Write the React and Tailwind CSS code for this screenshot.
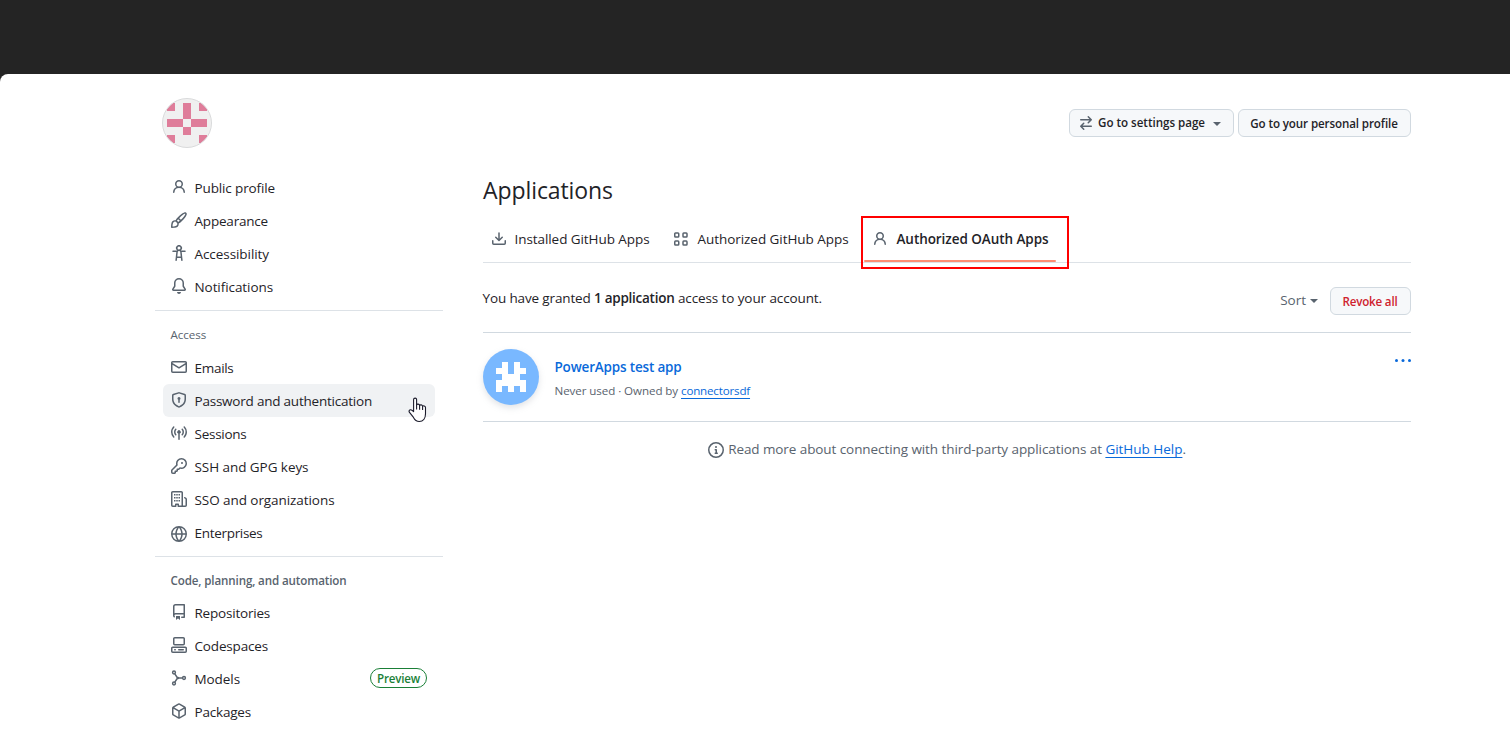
import React from "react";

const PATHS = {
  person:
    "M10.561 8.073a6.005 6.005 0 0 1 3.432 5.142.75.75 0 1 1-1.498.07 4.5 4.5 0 0 0-8.99 0 .75.75 0 0 1-1.498-.07 6.004 6.004 0 0 1 3.431-5.142 3.999 3.999 0 1 1 5.123 0ZM10.5 5a2.5 2.5 0 1 0-5 0 2.5 2.5 0 0 0 5 0Z",
  paintbrush:
    "M11.134 1.535c.7-.509 1.416-.942 2.076-1.155.649-.21 1.463-.267 2.069.34.603.601.568 1.411.368 2.07-.202.668-.624 1.39-1.125 2.096-1.011 1.424-2.496 2.987-3.775 4.249-1.098 1.084-2.132 1.839-3.04 2.3a3.744 3.744 0 0 1-1.055 3.217c-.431.431-1.065.691-1.657.861-.614.177-1.294.287-1.914.357A21.151 21.151 0 0 1 .797 16H.743l.007-.75H.749L.742 16a.75.75 0 0 1-.743-.742l.743-.008-.742.007v-.054a21.25 21.25 0 0 1 .13-2.284c.067-.647.187-1.287.358-1.914.17-.591.43-1.226.86-1.657a3.746 3.746 0 0 1 3.227-1.054c.466-.893 1.225-1.907 2.314-2.982 1.271-1.255 2.833-2.75 4.245-3.777ZM1.62 13.089c-.051.464-.086.929-.104 1.395.466-.018.932-.053 1.396-.104a10.511 10.511 0 0 0 1.668-.309c.526-.151.856-.325 1.011-.48a2.25 2.25 0 1 0-3.182-3.182c-.155.155-.329.485-.48 1.01a10.515 10.515 0 0 0-.309 1.67Zm10.396-10.34c-1.224.89-2.605 2.189-3.822 3.384l1.718 1.718c1.21-1.205 2.51-2.597 3.387-3.833.47-.662.78-1.227.912-1.662.134-.444.032-.551.009-.575h-.001V1.78c-.014-.014-.113-.113-.548.027-.432.14-.995.462-1.655.942Zm-4.832 7.266-.001.001a9.859 9.859 0 0 0 1.63-1.142L7.155 7.216a9.7 9.7 0 0 0-1.161 1.607c.482.302.889.71 1.19 1.192Z",
  accessibility:
    "M9.923 5.302c.063.063.122.129.178.198H14A.75.75 0 0 1 14 7h-3.3l.578 5.163.362 2.997a.75.75 0 0 1-1.49.18L9.868 13H6.132l-.282 2.34a.75.75 0 0 1-1.49-.18l.362-2.997L5.3 7H2a.75.75 0 0 1 0-1.5h3.9a2.54 2.54 0 0 1 .176-.198 3 3 0 1 1 3.847 0ZM9.2 7.073h-.001a1.206 1.206 0 0 0-2.398 0L6.305 11.5h3.39ZM9.5 3a1.5 1.5 0 1 0-3.001.001A1.5 1.5 0 0 0 9.5 3Z",
  bell:
    "M8 16a2 2 0 0 0 1.985-1.75c.017-.137-.097-.25-.235-.25h-3.5c-.138 0-.252.113-.235.25A2 2 0 0 0 8 16ZM3 5a5 5 0 0 1 10 0v2.947c0 .05.015.098.042.139l1.703 2.555A1.519 1.519 0 0 1 13.482 13H2.518a1.516 1.516 0 0 1-1.263-2.36l1.703-2.554A.255.255 0 0 0 3 7.947Zm5-3.5A3.5 3.5 0 0 0 4.5 5v2.947c0 .346-.102.683-.294.97l-1.703 2.556a.017.017 0 0 0-.003.01l.001.006c0 .002.002.004.004.006l.006.004.007.001h10.964l.007-.001.006-.004.004-.006.001-.007a.017.017 0 0 0-.003-.01l-1.703-2.554a1.745 1.745 0 0 1-.294-.97V5A3.5 3.5 0 0 0 8 1.5Z",
  mail:
    "M1.75 2h12.5c.966 0 1.75.784 1.75 1.75v8.5A1.75 1.75 0 0 1 14.25 14H1.75A1.75 1.75 0 0 1 0 12.25v-8.5C0 2.784.784 2 1.75 2ZM1.5 12.251c0 .138.112.25.25.25h12.5a.25.25 0 0 0 .25-.25V5.809L8.38 9.397a.75.75 0 0 1-.76 0L1.5 5.809v6.442Zm13-8.181v-.32a.25.25 0 0 0-.25-.25H1.75a.25.25 0 0 0-.25.25v.32L8 7.88Z",
  shieldLock:
    "m8.533.133 5.25 1.68A1.75 1.75 0 0 1 15 3.48V7c0 1.566-.32 3.182-1.303 4.682-.983 1.498-2.585 2.813-5.032 3.855a1.697 1.697 0 0 1-1.33 0c-2.447-1.042-4.049-2.357-5.032-3.855C1.32 10.182 1 8.566 1 7V3.48a1.75 1.75 0 0 1 1.217-1.667l5.25-1.68a1.748 1.748 0 0 1 1.066 0Zm-.61 1.429.001.001-5.25 1.68a.251.251 0 0 0-.174.237V7c0 1.36.275 2.666 1.057 3.859.784 1.194 2.121 2.342 4.366 3.298a.196.196 0 0 0 .154 0c2.245-.957 3.582-2.103 4.366-3.297C13.225 9.666 13.5 8.358 13.5 7V3.48a.25.25 0 0 0-.174-.238l-5.25-1.68a.25.25 0 0 0-.153 0ZM9.5 6.5c0 .536-.286 1.032-.75 1.3v2.45a.75.75 0 0 1-1.5 0V7.8A1.5 1.5 0 1 1 9.5 6.5Z",
  broadcast:
    "M8.75 8.582v5.668a.75.75 0 0 1-1.5 0V8.582a1.75 1.75 0 1 1 1.5 0Zm3.983-7.125a.75.75 0 0 1 1.06.026A7.976 7.976 0 0 1 16 7c0 2.139-.84 4.083-2.207 5.517a.75.75 0 1 1-1.086-1.034A6.474 6.474 0 0 0 14.5 7a6.474 6.474 0 0 0-1.793-4.483.75.75 0 0 1 .026-1.06Zm-9.466 0c.3.286.312.76.026 1.06A6.474 6.474 0 0 0 1.5 7a6.47 6.47 0 0 0 1.793 4.483.75.75 0 0 1-1.086 1.034A7.973 7.973 0 0 1 0 7c0-2.139.84-4.083 2.207-5.517a.75.75 0 0 1 1.06-.026Zm8.556 2.321A4.988 4.988 0 0 1 13 7a4.988 4.988 0 0 1-1.177 3.222.75.75 0 1 1-1.146-.967A3.487 3.487 0 0 0 11.5 7c0-.86-.309-1.645-.823-2.255a.75.75 0 0 1 1.146-.967Zm-6.492.958A3.48 3.48 0 0 0 4.5 7a3.48 3.48 0 0 0 .823 2.255.75.75 0 0 1-1.146.967A4.981 4.981 0 0 1 3 7a4.982 4.982 0 0 1 1.188-3.236.75.75 0 1 1 1.143.972Z",
  key:
    "M10.5 0a5.499 5.499 0 1 1-1.288 10.848l-.932.932a.749.749 0 0 1-.53.22H7v.75a.749.749 0 0 1-.22.53l-.5.5a.749.749 0 0 1-.53.22H5v.75a.749.749 0 0 1-.22.53l-.5.5a.749.749 0 0 1-.53.22h-2A1.75 1.75 0 0 1 0 14.25v-2c0-.199.079-.389.22-.53l4.932-4.932A5.5 5.5 0 0 1 10.5 0Zm-4 5.5c-.001.431.069.86.205 1.269a.75.75 0 0 1-.181.768L1.5 12.56v1.69c0 .138.112.25.25.25h1.69l.06-.06v-1.19a.75.75 0 0 1 .75-.75h1.19l.06-.06v-1.19a.75.75 0 0 1 .75-.75h1.19l1.023-1.025a.75.75 0 0 1 .768-.18A4 4 0 1 0 6.5 5.5ZM11 6a1 1 0 1 1 0-2 1 1 0 0 1 0 2Z",
  organization:
    "M1.75 16A1.75 1.75 0 0 1 0 14.25V1.75C0 .784.784 0 1.75 0h8.5C11.216 0 12 .784 12 1.75v12.5c0 .085-.006.168-.018.25h2.268a.25.25 0 0 0 .25-.25V8.285a.25.25 0 0 0-.111-.208l-1.055-.703a.749.749 0 1 1 .832-1.248l1.055.703c.487.325.779.871.779 1.456v5.965A1.75 1.75 0 0 1 14.25 16h-3.5a.766.766 0 0 1-.197-.026c-.099.017-.2.026-.303.026h-3a.75.75 0 0 1-.75-.75V14h-1v1.25a.75.75 0 0 1-.75.75Zm-.25-1.75c0 .138.112.25.25.25H4v-1.25a.75.75 0 0 1 .75-.75h2.5a.75.75 0 0 1 .75.75v1.25h2.25a.25.25 0 0 0 .25-.25V1.75a.25.25 0 0 0-.25-.25h-8.5a.25.25 0 0 0-.25.25ZM3 3h1.500v1.500H3ZM5.250 3h1.500v1.500h-1.500ZM7.500 3h1.500v1.500H7.500ZM3 6h1.500v1.500H3ZM5.250 6h1.500v1.500h-1.500ZM7.500 6h1.500v1.500H7.500ZM3 9h1.500v1.500H3ZM5.250 9h1.500v1.500h-1.500ZM7.500 9h1.500v1.500H7.500Z",
  globe:
    "M8 0a8 8 0 1 1 0 16A8 8 0 0 1 8 0ZM5.78 8.75a9.64 9.64 0 0 0 1.363 4.177c.255.426.542.832.857 1.215.245-.296.551-.705.857-1.215A9.64 9.64 0 0 0 10.22 8.75Zm4.44-1.5a9.64 9.64 0 0 0-1.363-4.177c-.307-.51-.612-.919-.857-1.215a9.927 9.927 0 0 0-.857 1.215A9.64 9.64 0 0 0 5.78 7.25Zm-5.944 1.5H1.543a6.507 6.507 0 0 0 4.666 5.5c-.123-.181-.24-.365-.352-.552-.715-1.192-1.437-2.874-1.581-4.948Zm-2.733-1.5h2.733c.144-2.074.866-3.756 1.58-4.948.12-.197.237-.381.353-.552a6.507 6.507 0 0 0-4.666 5.5Zm10.181 1.5c-.144 2.074-.866 3.756-1.58 4.948-.12.197-.237.381-.353.552a6.507 6.507 0 0 0 4.666-5.5Zm2.733-1.5a6.507 6.507 0 0 0-4.666-5.5c.123.181.24.365.353.552.714 1.192 1.436 2.874 1.58 4.948Z",
  repo:
    "M2 2.5A2.5 2.5 0 0 1 4.5 0h8.75a.75.75 0 0 1 .75.75v12.5a.75.75 0 0 1-.75.75h-2.5a.75.75 0 0 1 0-1.5h1.75v-2h-8a1 1 0 0 0-.714 1.7.75.75 0 1 1-1.072 1.05A2.495 2.495 0 0 1 2 11.5Zm10.5-1h-8a1 1 0 0 0-1 1v6.708A2.486 2.486 0 0 1 4.5 9h8ZM5 12.25a.25.25 0 0 1 .25-.25h3.5a.25.25 0 0 1 .25.25v3.25a.25.25 0 0 1-.4.2l-1.45-1.087a.249.249 0 0 0-.3 0L5.4 15.7a.25.25 0 0 1-.4-.2Z",
  codespaces:
    "M0 11.25c0-.966.784-1.75 1.75-1.75h12.5c.966 0 1.75.784 1.75 1.75v3A1.75 1.75 0 0 1 14.25 16H1.75A1.75 1.75 0 0 1 0 14.25Zm2-9.5C2 .784 2.784 0 3.75 0h8.5C13.216 0 14 .784 14 1.75v5a1.75 1.75 0 0 1-1.75 1.75h-8.5A1.75 1.75 0 0 1 2 6.75Zm1.75-.25a.25.25 0 0 0-.25.25v5c0 .138.112.25.25.25h8.5a.25.25 0 0 0 .25-.25v-5a.25.25 0 0 0-.25-.25Zm-2 9.5a.25.25 0 0 0-.25.25v3c0 .138.112.25.25.25h12.5a.25.25 0 0 0 .25-.25v-3a.25.25 0 0 0-.25-.25ZM7 12.75a.75.75 0 0 1 .75-.75h4.5a.75.75 0 0 1 0 1.5h-4.5a.75.75 0 0 1-.75-.75Zm-4 0a.75.75 0 0 1 .75-.75h.5a.75.75 0 0 1 0 1.5h-.5a.75.75 0 0 1-.75-.75Z",
  package:
    "m8.878.392 5.25 3.045c.54.314.872.89.872 1.514v6.098a1.75 1.75 0 0 1-.872 1.514l-5.25 3.045a1.75 1.75 0 0 1-1.756 0l-5.25-3.045A1.75 1.75 0 0 1 1 11.049V4.951c0-.624.332-1.201.872-1.514L7.122.392a1.75 1.75 0 0 1 1.756 0ZM7.875 1.69l-4.63 2.685L8 7.133l4.755-2.758-4.63-2.685a.248.248 0 0 0-.25 0ZM2.5 5.677v5.372c0 .09.047.171.125.216l4.625 2.683V8.432Zm6.25 8.271 4.625-2.683a.25.25 0 0 0 .125-.216V5.677L8.75 8.432Z",
  download:
    "M2.75 14A1.75 1.75 0 0 1 1 12.25v-2.5a.75.75 0 0 1 1.5 0v2.5c0 .138.112.25.25.25h10.5a.25.25 0 0 0 .25-.25v-2.5a.75.75 0 0 1 1.5 0v2.5A1.75 1.75 0 0 1 13.25 14ZM7.25 7.689V2a.75.75 0 0 1 1.5 0v5.689l1.97-1.969a.749.749 0 1 1 1.06 1.06l-3.25 3.25a.749.749 0 0 1-1.06 0L4.22 6.78a.749.749 0 1 1 1.06-1.06l1.97 1.969Z",
  arrowSwitch:
    "M5.22 14.78a.75.75 0 0 0 1.06-1.06L4.56 12h8.69a.75.75 0 0 0 0-1.5H4.56l1.72-1.72a.75.75 0 0 0-1.06-1.06l-3 3a.75.75 0 0 0 0 1.06l3 3Zm5.56-6.5a.75.75 0 1 1-1.06-1.06l1.72-1.72H2.75a.75.75 0 0 1 0-1.5h8.69L9.72 2.28a.75.75 0 0 1 1.06-1.06l3 3a.75.75 0 0 1 0 1.06l-3 3Z",
  info:
    "M0 8a8 8 0 1 1 16 0A8 8 0 0 1 0 8Zm8-6.5a6.5 6.5 0 1 0 0 13 6.5 6.5 0 0 0 0-13ZM6.5 7.75A.75.75 0 0 1 7.25 7h1a.75.75 0 0 1 .75.75v2.75h.25a.75.75 0 0 1 0 1.5h-2a.75.75 0 0 1 0-1.5h.25v-2h-.25a.75.75 0 0 1-.75-.75ZM8 6a1 1 0 1 1 0-2 1 1 0 0 1 0 2Z",
};

function Icon({ name, className = "" }) {
  return (
    <svg viewBox="0 0 16 16" className={`size-4 shrink-0 fill-[#59636e] ${className}`} aria-hidden="true">
      <path d={PATHS[name]} />
    </svg>
  );
}

function ModelIcon({ className = "" }) {
  return (
    <svg viewBox="0 0 16 16" className={`size-4 shrink-0 ${className}`} fill="none" stroke="#59636e" strokeWidth="1.5" aria-hidden="true">
      <circle cx="3" cy="2.5" r="1.4" />
      <circle cx="3" cy="13.500" r="1.4" />
      <circle cx="13" cy="8" r="1.4" />
      <path d="M3.800 3.800 6.600 8l-2.800 4.200M6.600 8h5" />
      <circle cx="6.900" cy="8" r="1.200" fill="#59636e" stroke="none" />
    </svg>
  );
}

function AppsIcon() {
  return (
    <svg viewBox="0 0 16 16" className="size-4 shrink-0" fill="none" stroke="#59636e" strokeWidth="1.5" aria-hidden="true">
      <rect x="1.75" y="2" width="4" height="4" rx="0.8" />
      <rect x="10" y="2" width="4" height="4" rx="0.8" />
      <rect x="1.75" y="10.100" width="4" height="4" rx="0.8" />
      <rect x="10" y="10.100" width="4" height="4" rx="0.8" />
    </svg>
  );
}

function Caret({ className = "" }) {
  return (
    <svg viewBox="0 0 8 4" className={`h-1 w-2 shrink-0 fill-[#59636e] ${className}`} aria-hidden="true">
      <path d="M0 0h8L4 4Z" />
    </svg>
  );
}

function HandCursor() {
  return (
    <svg viewBox="0 0 20 26" className="pointer-events-none absolute left-[245px] top-[13px] h-[26px] w-5" aria-hidden="true">
      <path
        d="M5.6 14.6V2.6a1.5 1.5 0 0 1 3 0V8c.3-1.3 2.9-1.2 3 .6.5-1.1 2.9-1 3 .8.6-1 2.9-.7 2.9 1.2v6.2c0 4.600-2.400 7.700-6.200 7.700-3.400 0-4.700-1.800-6-4.300L1.300 15.200c-.9-2.100 1.300-3.200 2.700-1.900Z"
        fill="#fff"
        stroke="#1b1b2b"
        strokeWidth="1.100"
        strokeLinejoin="round"
      />
      <path d="M8.600 7.500v5M11.600 8.500v4.200M14.600 9.500v3.500" stroke="#1b1b2b" strokeWidth="1.100" fill="none" />
    </svg>
  );
}

const PROFILE = [
  { icon: "person", label: "Public profile", track: "tracking-[-0.128px]" },
  { icon: "paintbrush", label: "Appearance", track: "tracking-[-0.198px]" },
  { icon: "accessibility", label: "Accessibility", track: "tracking-[-0.068px]" },
  { icon: "bell", label: "Notifications", track: "tracking-[-0.075px]" },
];

const ACCESS = [
  { icon: "mail", label: "Emails", track: "tracking-[-0.292px]" },
  { icon: "shieldLock", label: "Password and authentication", track: "tracking-[-0.22px]", hovered: true },
  { icon: "broadcast", label: "Sessions", track: "tracking-[-0.262px]" },
  { icon: "key", label: "SSH and GPG keys", track: "tracking-[-0.059px]" },
  { icon: "organization", label: "SSO and organizations", track: "tracking-[-0.067px]" },
  { icon: "globe", label: "Enterprises", track: "tracking-[-0.302px]", iconClass: "mt-[10px]" },
];

const CODE = [
  { icon: "repo", label: "Repositories", track: "tracking-[-0.209px]" },
  { icon: "codespaces", label: "Codespaces", track: "tracking-[-0.164px]" },
  { icon: "model", label: "Models", track: "tracking-[-0.074px]", badge: "Preview" },
  { icon: "package", label: "Packages", track: "tracking-[-0.191px]" },
];

function NavItem({ item }) {
  const offset = item.iconClass || "mt-2";
  return (
    <li className={`relative flex h-[33px] items-start gap-[7.5px] rounded-md px-2 ${item.hovered ? "bg-[#f0f2f4]" : ""}`}>
      {item.icon === "model" ? <ModelIcon className={offset} /> : <Icon name={item.icon} className={offset} />}
      <span className={`whitespace-nowrap leading-[35px] ${item.track}`}>{item.label}</span>
      {item.badge && (
        <span className="ml-auto mt-[6px] h-5 w-[57px] rounded-full border border-[#1a7f37] text-center text-[11.6px] font-semibold leading-5 tracking-[-0.196px] text-[#1a7f37]">
          {item.badge}
        </span>
      )}
      {item.hovered && <HandCursor />}
    </li>
  );
}

function NavList({ items }) {
  return (
    <ul className="px-2">
      {items.map((item) => (
        <NavItem key={item.label} item={item} />
      ))}
    </ul>
  );
}

function NavHeading({ children, className }) {
  return (
    <h3 className={`mt-2 h-[31px] px-[15.5px] text-[11.6px] leading-[31px] text-[#59636e] ${className}`}>
      {children}
    </h3>
  );
}

function UserAvatar() {
  return (
    <svg viewBox="0 0 50 50" className="ml-[7px] size-[50px]" aria-hidden="true">
      <defs>
        <clipPath id="avatar">
          <circle cx="25" cy="25" r="24.500" />
        </clipPath>
      </defs>
      <g clipPath="url(#avatar)">
        <path d="M0 0h50v50H0z" fill="#f0f0f0" />
        <path
          d="M5 5h8v8H5zM21 5h8v16h-8zM37 5h8v8h-8zM5 21h16v8H5zM29 21h16v8H29zM21 29h8v8h-8zM5 37h8v8H5zM37 37h8v8h-8z"
          fill="#df7d9a"
        />
      </g>
      <circle cx="25" cy="25" r="24.500" fill="none" stroke="#d9dadb" />
    </svg>
  );
}

function AppAvatar() {
  return (
    <div className="size-14 shrink-0 rounded-full bg-[#79b8ff] shadow-[0_3px_6px_rgba(140,149,159,0.25)]">
      <svg viewBox="0 0 56 56" className="size-14" fill="#fff" aria-hidden="true">
        <path d="M19 13h6v12h6V13h6v6h6v6h-6v6h6v12h-6v-6h-6v6h-6v-6h-6v6h-6V31h6v-6h-6v-6h6z" />
      </svg>
    </div>
  );
}

export default function App() {
  return (
    <div className="flex h-[734px] w-[1510px] flex-col overflow-hidden bg-[#242424] font-['Open_Sans',sans-serif] text-[13.5px] text-[#1f2328]">
      <div className="h-[74px] shrink-0" />
      <div className="flex-1 rounded-tl-lg bg-white pl-[155px] pt-6">
        <header className="flex h-[50px] w-[1256px] items-start justify-between">
          <UserAvatar />
          <div className="mt-[11px] flex gap-1 text-[11.6px] font-semibold">
            <button className="flex h-7 w-[165px] items-start rounded-md border border-[#d1d9e0] bg-[#f6f8fa] pl-2">
              <Icon name="arrowSwitch" className="mt-[5px]" />
              <span className="ml-1 whitespace-nowrap leading-[25px] tracking-[-0.021px]">Go to settings page</span>
              <Caret className="ml-2 mt-3" />
            </button>
            <button className="h-7 w-[173px] whitespace-nowrap rounded-md border border-[#d1d9e0] bg-[#f6f8fa] pr-px text-center leading-[28px] tracking-[-0.109px]">
              Go to your personal profile
            </button>
          </div>
        </header>

        <div className="flex gap-10 pt-[23px]">
          <nav className="w-[288px] shrink-0">
            <NavList items={PROFILE} />
            <div className="mt-[7px] h-px bg-[#dde2e7]" />
            <NavHeading className="mb-px font-medium tracking-[-0.06px]">Access</NavHeading>
            <NavList items={ACCESS} />
            <div className="mt-[7px] h-px bg-[#dde2e7]" />
            <NavHeading className="font-semibold tracking-[-0.123px]">Code, planning, and automation</NavHeading>
            <NavList items={CODE} />
          </nav>

          <main className="w-[928px]">
            <h1 className="h-[38px] text-[23px] leading-[38px] tracking-[-0.084px]">Applications</h1>

            <div className="flex h-[54px] border-b border-[#dde2e7] pt-[7px]">
              <div className="flex h-[46px] w-[182px] items-center gap-[7.5px] whitespace-nowrap pl-2">
                <Icon name="download" />
                <span className="tracking-[-0.071px]">Installed GitHub Apps</span>
              </div>
              <div className="flex h-[46px] w-[199px] items-center gap-[8.5px] whitespace-nowrap pl-2">
                <AppsIcon />
                <span className="tracking-[-0.052px]">Authorized GitHub Apps</span>
              </div>
              <div className="relative flex h-[46px] w-[192px] items-center gap-[8.5px] whitespace-nowrap pl-2">
                <Icon name="person" />
                <span className="font-semibold tracking-[-0.06px]">Authorized OAuth Apps</span>
                <div className="absolute inset-x-0 bottom-0 h-0.5 rounded-full bg-[#fd8c73]" />
                <div className="pointer-events-none absolute -left-[3px] top-0 h-[53px] w-[208px] border-2 border-[#ff0000]" />
              </div>
            </div>

            <div className="mt-6 flex h-7 items-start">
              <p className="-ml-[0.5px] whitespace-nowrap leading-[22px]">
                <span className="tracking-[-0.138px]">You have granted </span>
                <strong className="font-semibold tracking-[-0.258px]">1 application</strong>
                <span className="tracking-[-0.104px]"> access to your account.</span>
              </p>
              <span className="ml-auto flex items-start leading-[26px] text-[#59636e]">
                Sort
                <Caret className="ml-1 mt-3" />
              </span>
              <button className="ml-3 h-7 w-[81px] rounded-md border border-[#d1d9e0] bg-[#f6f8fa] pr-px text-[11.6px] font-semibold leading-[27px] tracking-[-0.188px] text-[#cf222e]">
                Revoke all
              </button>
            </div>

            <div className="mt-[17px] flex h-[90px] items-start border-y border-[#d1d9e0] pt-4">
              <AppAvatar />
              <div className="ml-[15.5px] mt-2">
                <h2 className="whitespace-nowrap font-semibold leading-5 tracking-[-0.175px] text-[#0969da]">PowerApps test app</h2>
                <p className="mt-[5px] whitespace-nowrap text-[11.6px] leading-[17px] text-[#59636e]">
                  <span className="tracking-[-0.079px]">Never used · Owned by </span>
                  <a className="tracking-[-0.181px] text-[#0969da] underline decoration-1 underline-offset-[3px] [text-decoration-skip-ink:none]">
                    connectorsdf
                  </a>
                </p>
              </div>
              <svg viewBox="0 0 16 16" className="ml-auto mt-[3px] size-4 fill-[#0969da]" aria-hidden="true">
                <circle cx="1.500" cy="8.500" r="1.500" />
                <circle cx="8" cy="8.500" r="1.500" />
                <circle cx="14.500" cy="8.500" r="1.500" />
              </svg>
            </div>

            <div className="mt-5 flex h-4 items-start justify-center gap-1 text-[#59636e]">
              <Icon name="info" />
              <p className="whitespace-nowrap leading-[15px] tracking-[-0.08px]">
                Read more about connecting with third-party applications at{" "}
                <a className="tracking-[-0.021px] text-[#0969da] underline decoration-1 underline-offset-[3px] [text-decoration-skip-ink:none]">
                  GitHub Help
                </a>
                .
              </p>
            </div>
          </main>
        </div>
      </div>
    </div>
  );
}
